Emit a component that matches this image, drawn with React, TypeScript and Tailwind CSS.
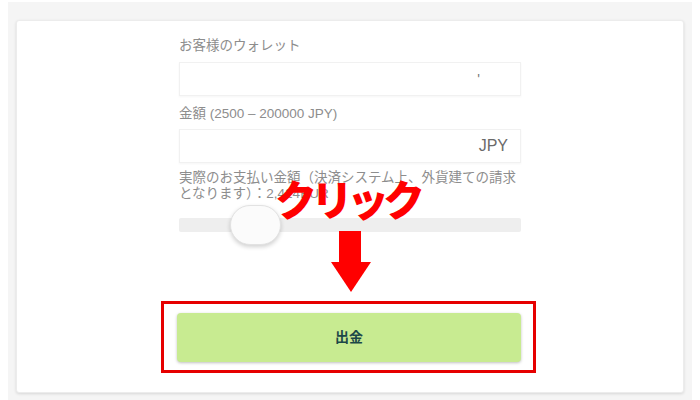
import React from 'react'

const jp = { fontFamily: '"Liberation Sans", "Noto Sans CJK JP", sans-serif' }

export default function App() {
  return (
    <div className="w-[700px] h-[400px] bg-white pt-[2px] px-2 overflow-hidden" style={jp}>
      <div className="h-[398px] bg-[#f5f5f5] pt-[18px] px-2">
        {/* Card */}
        <div className="relative h-[373px] bg-white rounded-[3px] border border-[#ececec] shadow-[0_1px_3px_rgba(0,0,0,0.12)] pt-[17px]">
          <div className="w-[342px] mx-auto">
            <p className="text-[13.5px] leading-4 text-[#8d8d8d]">お客様のウォレット</p>
            <div className="mt-2 h-[34px] bg-white border border-[#f1f1f1] shadow-[0_1px_2px_rgba(0,0,0,0.04)] flex items-center justify-end pr-10 text-[#777] text-sm">
              '
            </div>

            <p className="mt-[10px] text-[13.5px] leading-4 text-[#8d8d8d]">金額 (2500 – 200000 JPY)</p>
            <div className="mt-[7px] h-[34px] bg-white border border-[#f1f1f1] shadow-[0_1px_2px_rgba(0,0,0,0.04)] flex items-center justify-end pr-3">
              <span className="text-[16px] text-[#6a6a6a]">JPY</span>
            </div>

            <p className="mt-[7px] text-[13.5px] leading-4 text-[#8d8d8d]">
              実際のお支払い金額（決済システム上、外貨建ての請求となります）：2,424EUR
            </p>

            {/* Slider */}
            <div className="relative mt-4 h-[14px] bg-[#eeeeee] rounded-[2px]">
              <div className="absolute left-[51px] top-[-13px] w-[51px] h-[40px] rounded-full bg-[#fbfbfb] border border-[#e2e2e2] shadow-[0_2px_4px_rgba(0,0,0,0.18)]" />
            </div>

            {/* Red highlight around button */}
            <div className="mt-[69px] -ml-[18px] -mr-[15px] border-[3px] border-[#e60000] pt-[9px] pb-[8px] pl-[13px] pr-[12px]">
              <button className="w-full h-[49px] rounded-[4px] bg-[#c8eb91] shadow-[0_1px_3px_rgba(0,0,0,0.25)] text-[14px] font-bold text-[#1c4848]">
                出金
              </button>
            </div>
          </div>

          {/* Annotation: クリック + arrow */}
          <div className="absolute left-[258px] top-[156px] text-[42px] leading-none font-black text-[#ff0000] tracking-[-6px]" style={{ fontFamily: '"Noto Sans CJK JP", sans-serif' }}>
            クリック
          </div>
          <svg className="absolute left-[313px] top-[210px]" width="44" height="62" viewBox="0 0 44 62">
            <rect x="9" y="0" width="22" height="32" fill="#ff0000" />
            <polygon points="1,31 41,31 21,61" fill="#ff0000" />
          </svg>
        </div>
      </div>
    </div>
  )
}
